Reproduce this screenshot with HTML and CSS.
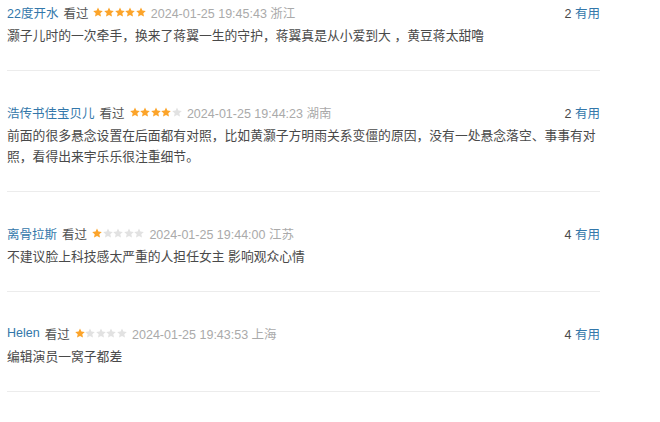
FILE: index.html
```html
<!DOCTYPE html>
<html lang="zh-CN">
<head>
    <meta charset="UTF-8">
    <meta name="viewport" content="width=device-width, initial-scale=1.0">
    <title>短评</title>
    <link rel="stylesheet" href="styles.css">
</head>

<body>
<main class="comments">
    <svg width="0" height="0" class="defs">
        <defs>
            <path id="star" d="M5 0.4l1.4 3.1 3.4 0.4-2.5 2.3 0.7 3.4L5 7.9 2 9.6l0.7-3.4L0.2 3.9l3.4-0.4z"/>
        </defs>
    </svg>

    <div class="comment">
        <div class="comment-info">
            <a class="user" href="#">22度开水</a>
            <span class="status">看过</span>
            <span class="stars" data-rating="5"></span>
            <span class="time">2024-01-25 19:45:43 浙江</span>
            <span class="votes"><span class="count">2</span> <a href="#">有用</a></span>
        </div>
        <p class="short">灏子儿时的一次牵手，换来了蒋翼一生的守护，蒋翼真是从小爱到大 ，黄豆蒋太甜噜</p>
    </div>

    <div class="comment">
        <div class="comment-info">
            <a class="user" href="#">浩传书佳宝贝儿</a>
            <span class="status">看过</span>
            <span class="stars" data-rating="4"></span>
            <span class="time">2024-01-25 19:44:23 湖南</span>
            <span class="votes"><span class="count">2</span> <a href="#">有用</a></span>
        </div>
        <p class="short">前面的很多悬念设置在后面都有对照，比如黄灏子方明雨关系变僵的原因，没有一处悬念落空、事事有对照，看得出来宇乐乐很注重细节。</p>
    </div>

    <div class="comment">
        <div class="comment-info">
            <a class="user" href="#">离骨拉斯</a>
            <span class="status">看过</span>
            <span class="stars" data-rating="1"></span>
            <span class="time">2024-01-25 19:44:00 江苏</span>
            <span class="votes"><span class="count">4</span> <a href="#">有用</a></span>
        </div>
        <p class="short">不建议脸上科技感太严重的人担任女主 影响观众心情</p>
    </div>

    <div class="comment">
        <div class="comment-info">
            <a class="user" href="#">Helen</a>
            <span class="status">看过</span>
            <span class="stars" data-rating="1"></span>
            <span class="time">2024-01-25 19:43:53 上海</span>
            <span class="votes"><span class="count">4</span> <a href="#">有用</a></span>
        </div>
        <p class="short">编辑演员一窝子都差</p>
    </div>
</main>

<script>
    // draw the rating stars
    document.querySelectorAll('.stars').forEach(el => {
        const rating = Number(el.dataset.rating);
        let html = '';
        for (let i = 1; i <= 5; i++) {
            const cls = i <= rating ? 'on' : 'off';
            html += `<svg class="star ${cls}" viewBox="0 0 10 10"><use href="#star"/></svg>`;
        }
        el.innerHTML = html;
    });
</script>
</body>
</html>
```

FILE: styles.css
```css
body {
    font-family: "Liberation Sans", Arial, "Noto Sans CJK SC", sans-serif;
    background-color: #fff;
    color: #494949;
    margin: 0;
}

.defs {
    position: absolute;
}

.comments {
    width: 593px;
    padding-left: 7px;
}

.comment {
    padding: 31px 0 24px;
    border-bottom: 1px solid #ececec;
}

.comment:first-of-type {
    padding-top: 2px;
}

.comment-info {
    display: flex;
    align-items: center;
    gap: 5px;
    height: 20px;
    font-size: 12.5px;
}

a {
    color: #3377aa;
    text-decoration: none;
}

.status {
    color: #555;
}

.stars {
    display: flex;
    gap: 0.6px;
}

.star {
    width: 10px;
    height: 10px;
}

.star.on {
    fill: #fca42a;
}

.star.off {
    fill: #e2e2e2;
}

.time {
    color: #aaa;
}

.votes {
    margin-left: auto;
}

.count {
    color: #494949;
}

.short {
    margin: 3px 0 0;
    font-size: 12.8px;
    line-height: 21px;
    color: #494949;
}
```
